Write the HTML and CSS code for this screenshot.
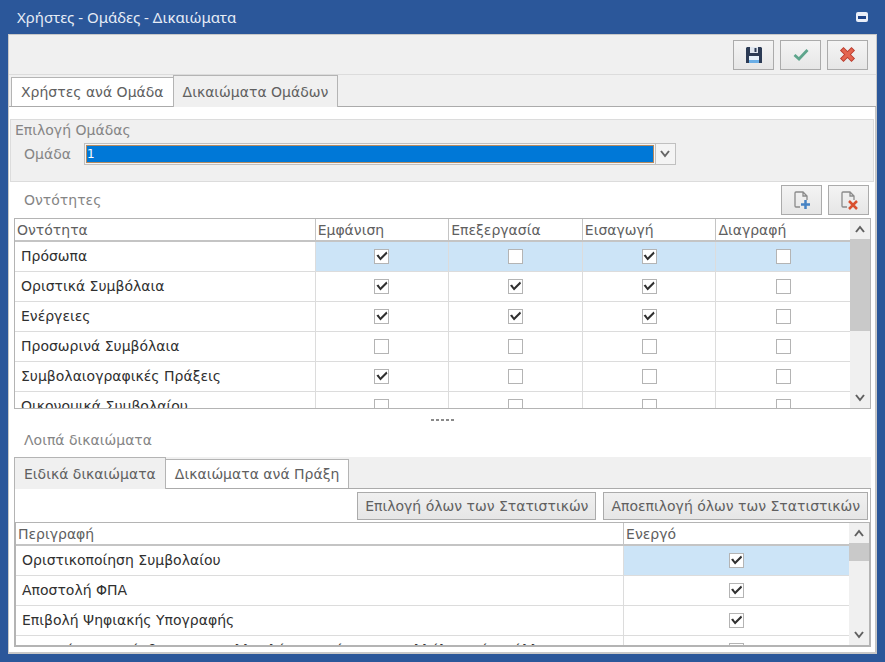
FILE: index.html
```html
<!DOCTYPE html>
<html lang="el">
<head>
<meta charset="utf-8">
<title>Χρήστες - Ομάδες - Δικαιώματα</title>
<link rel="stylesheet" href="styles.css">
</head>
<body>
<div class="window">
  <header class="titlebar">
    <h1>Χρήστες - Ομάδες - Δικαιώματα</h1>
    <button class="restore" aria-label="Επαναφορά"><svg width="12" height="10" viewBox="0 0 12 10"><rect x="0" y="0" width="12" height="10" rx="2" fill="#e9eef8"/><rect x="2" y="4" width="8" height="3" fill="#1f4488"/></svg></button>
  </header>
  <main class="client">
    <div class="toolbar">
      <button class="tool" aria-label="Αποθήκευση"><svg width="18" height="18" viewBox="0 0 18 18"><path d="M1 2l1-1h14l1 1v15H1z" fill="#2c3b55"/><path d="M5 1h8v6H5z" fill="#dfe6ef"/><path d="M9.500 2h2v4h-2z" fill="#2c3b55"/><path d="M4 10h10v7H4z" fill="#e8f3fc"/><path d="M4 14h10v3H4z" fill="#6aaee6"/></svg></button>
      <button class="tool" aria-label="Εντάξει"><svg width="18" height="18" viewBox="0 0 18 18"><path d="M2.500 9l4.500 4 8.500-9" fill="none" stroke="#5ea58c" stroke-width="2.800"/></svg></button>
      <button class="tool" aria-label="Ακύρωση"><svg width="18" height="18" viewBox="0 0 18 18"><path d="M4.500 4.500l8 8M12.500 4.500l-8 8" fill="none" stroke="#b93a2c" stroke-width="5" stroke-linecap="square"/><path d="M4.500 4.500l8 8M12.500 4.500l-8 8" fill="none" stroke="#e4644f" stroke-width="3.200" stroke-linecap="square"/></svg></button>
    </div>
    <nav class="tabs" role="tablist">
      <button class="tab" role="tab" aria-selected="false">Χρήστες ανά Ομάδα</button>
      <button class="tab active" role="tab" aria-selected="true">Δικαιώματα Ομάδων</button>
    </nav>
    <div class="page">
      <fieldset class="group">
        <h2>Επιλογή Ομάδας</h2>
        <div class="field">
          <label for="team">Ομάδα</label>
          <div class="combo">
            <select id="team"><option>1</option></select>
            <span class="arrow"><svg width="12" height="12" viewBox="0 0 12 12"><path d="M2 3l4 5 4-5" fill="none" stroke="#666" stroke-width="2"/></svg></span>
          </div>
        </div>
      </fieldset>
      <section class="entities">
        <div class="bar">
          <h3>Οντότητες</h3>
          <div class="tools">
            <button class="tool" aria-label="Προσθήκη"><svg width="18" height="20" viewBox="0 0 18 20"><path d="M7 17H3q-1 0-1-1V3q0-1 1-1h7l4 4v4M10 2v4h4" fill="none" stroke="#8a8a8a" stroke-width="1.300"/><path d="M12.500 10v9M8 14.500h9" stroke="#4683c4" stroke-width="2.500"/></svg></button>
            <button class="tool" aria-label="Διαγραφή"><svg width="18" height="20" viewBox="0 0 18 20"><path d="M7 17H3q-1 0-1-1V3q0-1 1-1h7l4 4v4M10 2v4h4" fill="none" stroke="#8a8a8a" stroke-width="1.300"/><path d="M9 11l8 8M17 11l-8 8" stroke="#d9502f" stroke-width="2.500"/></svg></button>
          </div>
        </div>
        <div class="grid">
          <div class="clip">
            <table id="entities">
              <colgroup><col><col class="flag"><col class="flag"><col class="flag"><col class="flag"></colgroup>
              <thead><tr><th>Οντότητα</th><th>Εμφάνιση</th><th>Επεξεργασία</th><th>Εισαγωγή</th><th>Διαγραφή</th></tr></thead>
              <tbody></tbody>
            </table>
          </div>
          <div class="scroll">
            <button aria-label="Πάνω"><svg width="12" height="10" viewBox="0 0 12 10"><path d="M2 8l4-5 4 5" fill="none" stroke="#606060" stroke-width="2"/></svg></button>
            <div class="track"><div class="thumb"></div></div>
            <button aria-label="Κάτω"><svg width="12" height="10" viewBox="0 0 12 10"><path d="M2 2l4 5 4-5" fill="none" stroke="#606060" stroke-width="2"/></svg></button>
          </div>
        </div>
      </section>
      <div class="splitter"><i></i><i></i><i></i><i></i><i></i></div>
      <section class="other">
        <h3>Λοιπά δικαιώματα</h3>
        <nav class="tabs" role="tablist">
          <button class="tab active" role="tab" aria-selected="true">Ειδικά δικαιώματα</button>
          <button class="tab" role="tab" aria-selected="false">Δικαιώματα ανά Πράξη</button>
        </nav>
        <div class="subpage">
          <div class="actions">
            <button>Επιλογή όλων των Στατιστικών</button>
            <button>Αποεπιλογή όλων των Στατιστικών</button>
          </div>
          <div class="grid">
            <div class="clip">
              <table id="rights">
                <colgroup><col><col class="enabled"></colgroup>
                <thead><tr><th>Περιγραφή</th><th>Ενεργό</th></tr></thead>
                <tbody></tbody>
              </table>
            </div>
            <div class="scroll">
              <button aria-label="Πάνω"><svg width="12" height="10" viewBox="0 0 12 10"><path d="M2 8l4-5 4 5" fill="none" stroke="#606060" stroke-width="2"/></svg></button>
              <div class="track"><div class="thumb"></div></div>
              <button aria-label="Κάτω"><svg width="12" height="10" viewBox="0 0 12 10"><path d="M2 2l4 5 4-5" fill="none" stroke="#606060" stroke-width="2"/></svg></button>
            </div>
          </div>
        </div>
      </section>
    </div>
  </main>
</div>
<script src="app.js"></script>
</body>
</html>
```
FILE: styles.css
```css
* { box-sizing: border-box; }
body { margin: 0; font: 14px/20px "DejaVu Sans", sans-serif; color: #606060; background: #2b579a; }
h1, h2, h3 { margin: 0; font: inherit; }
button { font: inherit; color: inherit; padding: 0; margin: 0; white-space: nowrap; }
svg { display: block; }
.window { height: 100vh; display: flex; flex-direction: column; padding: 0 8px 8px; }
.titlebar { flex: none; height: 34px; display: flex; align-items: center; justify-content: space-between; padding: 0 9px; }
.titlebar h1 { color: #e6ecf6; font: 15px/20px "Noto Sans", sans-serif; }
.restore { border: 0; background: none; }
.client { flex: 1; min-height: 0; display: flex; flex-direction: column; background: #f0f0f0; border: 1px solid #c8c8c8; border-width: 1px 1px 2px; }
.toolbar { flex: none; height: 40px; display: flex; justify-content: flex-end; align-items: center; gap: 6px; padding-right: 8px; border-bottom: 1px solid #dcdcdc; }
.tool { width: 41px; height: 30px; display: flex; align-items: center; justify-content: center; background: linear-gradient(#f4f4f4, #e6e6e6); border: 1px solid #ababab; }
.tabs { flex: none; height: 32px; display: flex; align-items: flex-end; background: #f0f0f0; border-bottom: 1px solid #ababab; }
.client > .tabs { padding-left: 2px; }
.tab { height: 29px; padding: 0 9px; background: #fff; border: 1px solid #b4b4b4; border-bottom: 0; color: #606060; }
.tab.active { height: 32px; margin-bottom: -1px; background: #f0f0f0; }
.tab + .tab { border-left: 0; }
.tab + .tab.active { border-left: 1px solid #b4b4b4; margin-left: -1px; }
.page { flex: 1; min-height: 0; display: flex; flex-direction: column; background: #fff; padding: 12px 1px 5px 1px; border-right: 1px solid #c4c4c4; }
.group { flex: none; min-width: 0; height: 63px; margin: 0; padding: 0 4px; background: #f0f0f0; border: 1px solid #dcdcdc; color: #858585; }
.field { display: flex; align-items: center; height: 28px; padding-left: 9px; gap: 12px; }
.field label { width: 48px; }
.combo { width: 70%; height: 22px; display: flex; border: 1px solid #c0c0c0; background: #f4f4f4; }
.combo select { flex: 1; appearance: none; margin: 1px; padding: 0; border: 1px solid #b58a60; border-radius: 0; background: #0078d7; color: #fff; font: 12px/16px "DejaVu Sans", sans-serif; outline: 0; }
.arrow { width: 20px; display: flex; align-items: center; justify-content: center; border-left: 1px solid #c0c0c0; }
h3 { color: #858585; }
.entities { flex: none; padding: 0 3px 0 4px; }
.bar { height: 36px; display: flex; align-items: center; justify-content: space-between; padding: 0 2px 0 10px; }
.tools { display: flex; gap: 6px; }
.grid { display: flex; border: 1px solid #b4b4b4; background: #fff; }
.entities .grid { height: 191px; }
.clip { flex: 1; min-width: 0; overflow: hidden; }
table { width: 100%; table-layout: fixed; border-collapse: separate; border-spacing: 0; }
.flag { width: 16%; }
.enabled { width: 27%; }
th { height: 23px; padding: 0 2px; text-align: left; font-weight: 400; border-bottom: 2px solid #c4c4c4; border-right: 1px solid #c4c4c4; }
td { height: 30px; padding: 0 6px 1px; color: #303030; white-space: nowrap; border-bottom: 1px solid #dcdcdc; border-right: 1px solid #dcdcdc; }
td + td { text-align: center; }
th:last-child, td:last-child { border-right: 0; }
tbody tr:first-child td + td { background: #cce4f7; }
input { appearance: none; width: 15px; height: 15px; display: block; margin: 0 auto; border: 1px solid #b4b4b4; background: #fff; }
input:checked::before { content: ""; display: block; width: 13px; height: 13px; background: #303030; clip-path: polygon(1px 6px, 3px 5px, 5px 8px, 11px 2px, 12px 4px, 5px 11px); }
.scroll { flex: none; width: 20px; display: flex; flex-direction: column; background: #f0f0f0; }
.scroll button { height: 20px; border: 0; background: none; display: flex; align-items: center; justify-content: center; }
.track { flex: 1; }
.thumb { height: 62%; background: #c9c9c9; }
.splitter { flex: none; height: 21px; display: flex; gap: 2px; align-items: center; justify-content: center; }
.splitter i { width: 3px; height: 2px; background: #8a8a8a; }
.other { flex: 1; min-height: 0; display: flex; flex-direction: column; padding: 0 3px 0 4px; }
.other h3 { height: 27px; padding-left: 10px; }
.subpage { flex: 1; min-height: 0; display: flex; flex-direction: column; border: 1px solid #b4b4b4; border-top: 0; }
.actions { flex: none; height: 33px; display: flex; justify-content: flex-end; align-items: center; gap: 7px; padding-right: 2px; }
.actions button { height: 28px; padding: 0 7px; background: linear-gradient(#f0f0f0, #e6e6e6); border: 1px solid #ababab; }
.other .grid { flex: 1; min-height: 0; }
.other .thumb { height: 22%; }
```
FILE: app.js
```js
const box = (label, on) => `<td><input type="checkbox" aria-label="${label}"${on ? " checked" : ""}></td>`;
const fill = (id, rows) => {
  document.querySelector(`#${id} tbody`).innerHTML = rows
    .map(([name, ...flags]) => `<tr><td>${name}</td>${flags.map(f => box(name, f)).join("")}</tr>`)
    .join("");
};
fill("entities", [
  ["Πρόσωπα", 1, 0, 1, 0],
  ["Οριστικά Συμβόλαια", 1, 1, 1, 0],
  ["Ενέργειες", 1, 1, 1, 0],
  ["Προσωρινά Συμβόλαια", 0, 0, 0, 0],
  ["Συμβολαιογραφικές Πράξεις", 1, 0, 0, 0],
  ["Οικονομικά Συμβολαίου", 0, 0, 0, 0]
]);
fill("rights", [
  ["Οριστικοποίηση Συμβολαίου", 1],
  ["Αποστολή ΦΠΑ", 1],
  ["Επιβολή Ψηφιακής Υπογραφής", 1],
  ["Δυνατότητα πρόσβασης σε πολλαπλά στοιχεία των υπαλλήλων μέσω άλλων", 0]
]);
```
